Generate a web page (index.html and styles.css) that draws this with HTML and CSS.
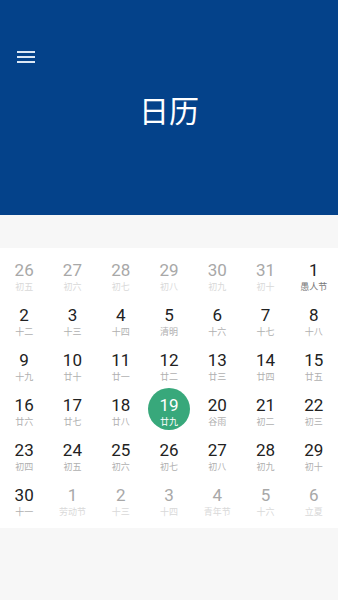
FILE: index.html
```html
<!DOCTYPE html>
<html lang="zh">
<head>
<meta charset="utf-8">
<title>日历</title>
<link rel="stylesheet" href="styles.css">
</head>
<body>
<header class="header">
  <div class="toolbar">
    <svg class="menu" width="18" height="12" viewBox="0 0 18 12"><rect x="0" y="0" width="18" height="2"/><rect x="0" y="5" width="18" height="2"/><rect x="0" y="10" width="18" height="2"/></svg>
  </div>
  <h1 class="title">日历</h1>
</header>
<div class="band"></div>
<main class="calendar">
  <div class="cell other"><span class="num">26</span><span class="lunar">初五</span></div>
  <div class="cell other"><span class="num">27</span><span class="lunar">初六</span></div>
  <div class="cell other"><span class="num">28</span><span class="lunar">初七</span></div>
  <div class="cell other"><span class="num">29</span><span class="lunar">初八</span></div>
  <div class="cell other"><span class="num">30</span><span class="lunar">初九</span></div>
  <div class="cell other"><span class="num">31</span><span class="lunar">初十</span></div>
  <div class="cell"><span class="num">1</span><span class="lunar fest">愚人节</span></div>

  <div class="cell"><span class="num">2</span><span class="lunar">十二</span></div>
  <div class="cell"><span class="num">3</span><span class="lunar">十三</span></div>
  <div class="cell"><span class="num">4</span><span class="lunar">十四</span></div>
  <div class="cell"><span class="num">5</span><span class="lunar">清明</span></div>
  <div class="cell"><span class="num">6</span><span class="lunar">十六</span></div>
  <div class="cell"><span class="num">7</span><span class="lunar">十七</span></div>
  <div class="cell"><span class="num">8</span><span class="lunar">十八</span></div>

  <div class="cell"><span class="num">9</span><span class="lunar">十九</span></div>
  <div class="cell"><span class="num">10</span><span class="lunar">廿十</span></div>
  <div class="cell"><span class="num">11</span><span class="lunar">廿一</span></div>
  <div class="cell"><span class="num">12</span><span class="lunar">廿二</span></div>
  <div class="cell"><span class="num">13</span><span class="lunar">廿三</span></div>
  <div class="cell"><span class="num">14</span><span class="lunar">廿四</span></div>
  <div class="cell"><span class="num">15</span><span class="lunar">廿五</span></div>

  <div class="cell"><span class="num">16</span><span class="lunar">廿六</span></div>
  <div class="cell"><span class="num">17</span><span class="lunar">廿七</span></div>
  <div class="cell"><span class="num">18</span><span class="lunar">廿八</span></div>
  <div class="cell selected"><span class="num">19</span><span class="lunar">廿九</span></div>
  <div class="cell"><span class="num">20</span><span class="lunar">谷雨</span></div>
  <div class="cell"><span class="num">21</span><span class="lunar">初二</span></div>
  <div class="cell"><span class="num">22</span><span class="lunar">初三</span></div>

  <div class="cell"><span class="num">23</span><span class="lunar">初四</span></div>
  <div class="cell"><span class="num">24</span><span class="lunar">初五</span></div>
  <div class="cell"><span class="num">25</span><span class="lunar">初六</span></div>
  <div class="cell"><span class="num">26</span><span class="lunar">初七</span></div>
  <div class="cell"><span class="num">27</span><span class="lunar">初八</span></div>
  <div class="cell"><span class="num">28</span><span class="lunar">初九</span></div>
  <div class="cell"><span class="num">29</span><span class="lunar">初十</span></div>

  <div class="cell"><span class="num">30</span><span class="lunar">十一</span></div>
  <div class="cell other"><span class="num">1</span><span class="lunar">劳动节</span></div>
  <div class="cell other"><span class="num">2</span><span class="lunar">十三</span></div>
  <div class="cell other"><span class="num">3</span><span class="lunar">十四</span></div>
  <div class="cell other"><span class="num">4</span><span class="lunar">青年节</span></div>
  <div class="cell other"><span class="num">5</span><span class="lunar">十六</span></div>
  <div class="cell other"><span class="num">6</span><span class="lunar">立夏</span></div>
</main>
</body>
</html>
```

FILE: styles.css
```css
html, body {
  margin: 0;
  padding: 0;
}
body {
  background: #f7f7f7;
  font-family: Roboto, "Noto Sans CJK SC", sans-serif;
  width: 338px;
  height: 600px;
  overflow: hidden;
}
.header {
  background: #04428a;
  height: 215px;
  display: flex;
  flex-direction: column;
  box-sizing: border-box;
}
.toolbar {
  height: 56px;
  padding: 51px 0 0 17px;
  box-sizing: border-box;
  display: flex;
  align-items: flex-start;
}
.menu {
  fill: #dbe7f5;
  display: block;
}
.title {
  margin: 33px 0 0;
  text-align: center;
  color: #ffffff;
  font-family: "Noto Sans CJK SC", sans-serif;
  font-weight: 400;
  font-size: 30px;
  line-height: 40px;
}
.band {
  height: 33px;
  background: #f7f7f7;
}
.calendar {
  background: #ffffff;
  display: grid;
  grid-template-columns: repeat(7, 1fr);
  grid-auto-rows: 45px;
  padding: 5px 0;
}
.cell {
  display: flex;
  flex-direction: column;
  align-items: center;
  padding-top: 7px;
  box-sizing: border-box;
}
.num {
  font-family: Roboto, sans-serif;
  font-size: 17px;
  line-height: 20px;
  color: #222222;
}
.lunar {
  font-family: "Noto Sans CJK SC", sans-serif;
  font-size: 9px;
  line-height: 14px;
  color: #b0b0b0;
}
.lunar.fest {
  color: #777777;
}
.other .num {
  color: #a8a8a8;
}
.other .lunar {
  color: #d9d9d9;
}
.selected {
  position: relative;
}
.selected::before {
  content: "";
  position: absolute;
  left: 50%;
  top: 0;
  width: 42px;
  height: 42px;
  margin-left: -21px;
  border-radius: 50%;
  background: #38a87b;
}
.selected .num,
.selected .lunar {
  position: relative;
  color: #ffffff;
}
```
